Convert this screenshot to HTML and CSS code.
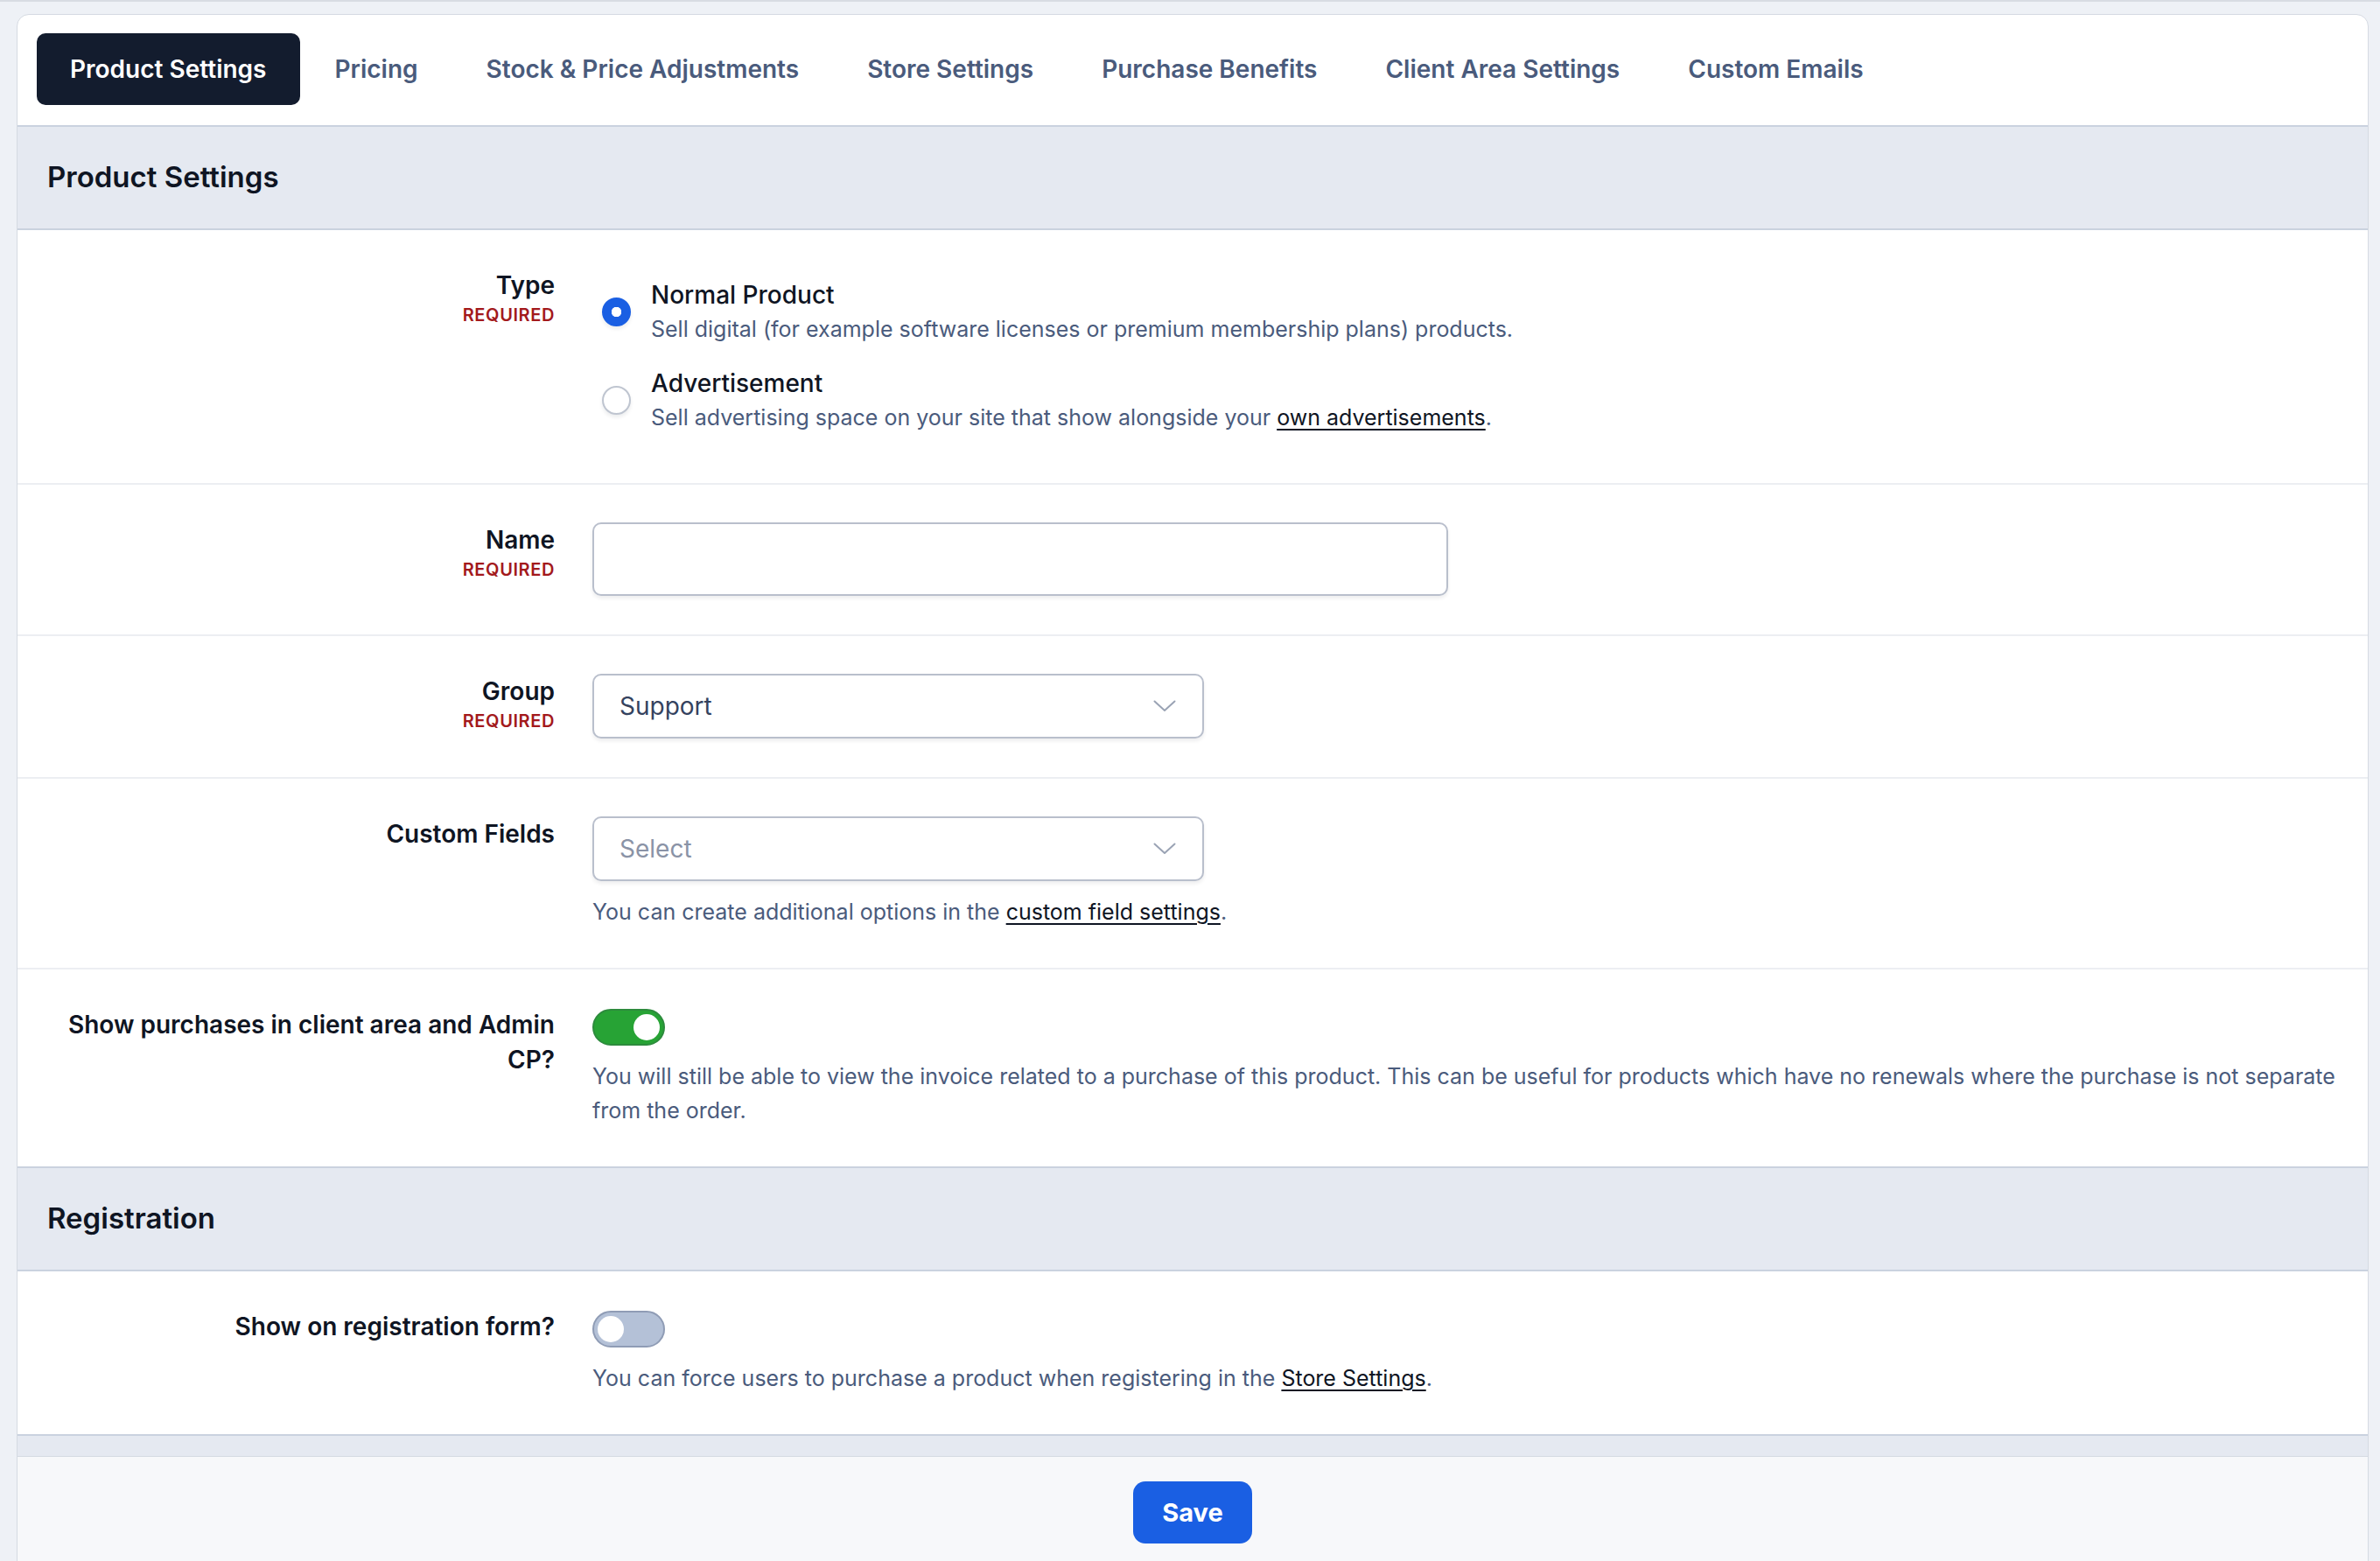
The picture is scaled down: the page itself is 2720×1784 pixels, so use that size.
FILE: index.html
```html
<!DOCTYPE html>
<html lang="en">
<head>
  <meta charset="UTF-8">
  <meta name="viewport" content="width=device-width, initial-scale=1.0">
  <title>Product Settings</title>
  <link rel="stylesheet" href="styles.css">
</head>
<body>
  <div class="card">
    <nav class="tabs">
      <a class="tab active">Product Settings</a>
      <a class="tab">Pricing</a>
      <a class="tab">Stock &amp; Price Adjustments</a>
      <a class="tab">Store Settings</a>
      <a class="tab">Purchase Benefits</a>
      <a class="tab">Client Area Settings</a>
      <a class="tab">Custom Emails</a>
    </nav>

    <h2 class="section-head">Product Settings</h2>

    <!-- Type -->
    <div class="row">
      <div class="label">
        <span>Type</span>
        <span class="required">Required</span>
      </div>
      <div class="field">
        <div class="options">
          <label class="option">
            <span class="radio checked"></span>
            <span class="option-text">
              <span class="option-title">Normal Product</span>
              <span class="desc">Sell digital (for example software licenses or premium membership plans) products.</span>
            </span>
          </label>
          <label class="option">
            <span class="radio"></span>
            <span class="option-text">
              <span class="option-title">Advertisement</span>
              <span class="desc">Sell advertising space on your site that show alongside your <a class="link">own advertisements</a>.</span>
            </span>
          </label>
        </div>
      </div>
    </div>

    <!-- Name -->
    <div class="row">
      <div class="label">
        <span>Name</span>
        <span class="required">Required</span>
      </div>
      <div class="field">
        <div class="input text-input"></div>
      </div>
    </div>

    <!-- Group -->
    <div class="row">
      <div class="label">
        <span>Group</span>
        <span class="required">Required</span>
      </div>
      <div class="field">
        <div class="input select">
          <span>Support</span>
          <svg class="chevron" width="26" height="14" viewBox="0 0 26 14"><path d="M1.5 1.5 L13 12 L24.5 1.5" fill="none" stroke="#9aa3b4" stroke-width="2" stroke-linecap="round" stroke-linejoin="round"/></svg>
        </div>
      </div>
    </div>

    <!-- Custom fields -->
    <div class="row">
      <div class="label">
        <span>Custom Fields</span>
      </div>
      <div class="field">
        <div class="input select placeholder">
          <span>Select</span>
          <svg class="chevron" width="26" height="14" viewBox="0 0 26 14"><path d="M1.5 1.5 L13 12 L24.5 1.5" fill="none" stroke="#9aa3b4" stroke-width="2" stroke-linecap="round" stroke-linejoin="round"/></svg>
        </div>
        <p class="desc help">You can create additional options in the <a class="link">custom field settings</a>.</p>
      </div>
    </div>

    <!-- Show purchases -->
    <div class="row">
      <div class="label">
        <span>Show purchases in client area and Admin CP?</span>
      </div>
      <div class="field">
        <span class="toggle on"><span class="knob"></span></span>
        <p class="desc help">You will still be able to view the invoice related to a purchase of this product. This can be useful for products which have no renewals where the purchase is not separate from the order.</p>
      </div>
    </div>

    <h2 class="section-head">Registration</h2>

    <div class="row">
      <div class="label">
        <span>Show on registration form?</span>
      </div>
      <div class="field">
        <span class="toggle"><span class="knob"></span></span>
        <p class="desc help">You can force users to purchase a product when registering in the <a class="link">Store Settings</a>.</p>
      </div>
    </div>

    <div class="spacer-band"></div>

    <div class="form-footer">
      <button class="btn-save">Save</button>
    </div>
  </div>
</body>
</html>
```

FILE: styles.css
```css
:root {
  --ink: #0f1523;
  --muted: #4a5b7c;
  --band: #e5e9f1;
  --band-line: #cad2df;
  --row-line: #eceef2;
  --blue: #1a5fe3;
  --red: #a3191c;
}

* {
  box-sizing: border-box;
}

body {
  margin: 0;
  padding: 14px 13px 0 19px;
  background: #eef1f6;
  border-top: 2px solid #d8dce3;
  font-family: Inter, "Noto Sans", sans-serif;
  color: var(--ink);
  overflow: hidden;
}

.card {
  background: #fff;
  border: 1px solid #d5dae2;
  border-radius: 14px 14px 0 0;
  overflow: hidden;
}

/* tabs */
.tabs {
  display: flex;
  gap: 2px;
  padding: 21px 22px 23px;
  border-bottom: 2px solid var(--band-line);
}

.tab {
  height: 82px;
  display: flex;
  align-items: center;
  padding: 0 38px;
  border-radius: 10px;
  font-size: 28px;
  font-weight: 600;
  color: var(--muted);
}

.tab.active {
  background: #131c2e;
  color: #fff;
}

/* section header band */
.section-head {
  margin: 0;
  background: var(--band);
  border-bottom: 2px solid var(--band-line);
  padding: 33px 34px 35px;
  font-size: 33px;
  line-height: 48px;
  font-weight: 600;
}

.row + .section-head {
  border-top: 2px solid var(--band-line);
}

/* form rows */
.row {
  display: grid;
  grid-template-columns: 574px 1fr;
  column-gap: 43px;
  padding: 43px 18px 44px 40px;
}

.row + .row {
  border-top: 2px solid var(--row-line);
}

.label {
  text-align: right;
  font-size: 28px;
  line-height: 40px;
  font-weight: 600;
  display: flex;
  flex-direction: column;
}

.required {
  text-transform: uppercase;
  color: var(--red);
  font-size: 20px;
  line-height: 28px;
  font-weight: 600;
  letter-spacing: 0.6px;
}

.field {
  min-width: 0;
}

.desc {
  display: block;
  margin: 0;
  color: var(--muted);
  font-size: 25px;
  line-height: 39px;
}

.help {
  margin-top: 16px;
}

.link {
  color: var(--ink);
  text-decoration: underline;
  text-underline-offset: 4px;
  text-decoration-thickness: 2px;
}

/* radios */
.options {
  display: flex;
  flex-direction: column;
  gap: 22px;
  padding: 11px 0 11px;
}

.option {
  display: flex;
  align-items: center;
  gap: 23px;
}

.radio {
  flex: none;
  width: 33px;
  height: 33px;
  margin-left: 11px;
  border-radius: 50%;
  border: 2px solid #bfc5d0;
  background: #fff;
  box-shadow: 0 3px 4px rgba(15, 21, 35, 0.08);
}

.radio.checked {
  border-color: var(--blue);
  background: var(--blue) radial-gradient(circle, #fff 0 5.5px, transparent 6px);
}

.option-text {
  display: flex;
  flex-direction: column;
}

.option-title {
  font-size: 28px;
  line-height: 40px;
  font-weight: 500;
}

/* inputs */
.input {
  border: 2px solid #b9bfcc;
  border-radius: 10px;
  background: #fff;
  box-shadow: 0 3px 4px rgba(15, 21, 35, 0.07);
}

.text-input {
  width: 978px;
  height: 84px;
}

.select {
  width: 699px;
  height: 74px;
  display: flex;
  align-items: center;
  justify-content: space-between;
  padding: 0 30px 0 29px;
  font-size: 28px;
  color: #34425e;
}

.select.placeholder {
  color: #8a93a6;
}

.chevron {
  flex: none;
}

/* toggles */
.toggle {
  display: flex;
  align-items: center;
  width: 83px;
  height: 42px;
  margin-top: 2px;
  padding: 0 4px;
  border-radius: 21px;
  background: #b4c1d7;
  border: 2px solid #8f9cb5;
}

.toggle.on {
  background: #27a335;
  border-color: #2d8b3d;
  justify-content: flex-end;
}

.knob {
  width: 30px;
  height: 30px;
  border-radius: 50%;
  background: #fff;
}

/* footer */
.spacer-band {
  height: 26px;
  background: var(--band);
  border-top: 2px solid var(--band-line);
  border-bottom: 1px solid #d5dae2;
}

.form-footer {
  background: #f7f8fa;
  display: flex;
  justify-content: center;
  padding: 28px 0 40px;
}

.btn-save {
  width: 136px;
  height: 71px;
  border: none;
  border-radius: 14px;
  background: var(--blue);
  color: #fff;
  font-family: inherit;
  font-size: 29px;
  font-weight: 700;
}
```
